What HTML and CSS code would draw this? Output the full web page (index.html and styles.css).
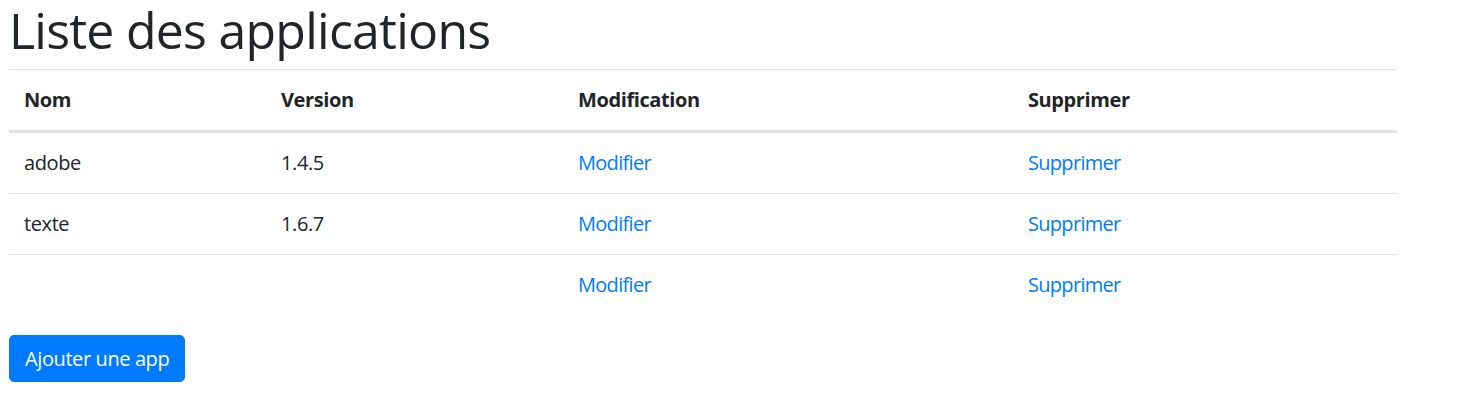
FILE: index.html
```html
<!DOCTYPE html>
<html lang="fr">
<head>
<meta charset="utf-8">
<title>Liste des applications</title>
<link rel="stylesheet" href="styles.css">
</head>
<body>
<main class="page">
  <h1 class="title">Liste des applications</h1>
  <table class="apps">
    <colgroup>
      <col class="c-nom"><col class="c-version"><col class="c-modif"><col class="c-suppr">
    </colgroup>
    <thead>
      <tr><th>Nom</th><th>Version</th><th>Modification</th><th>Supprimer</th></tr>
    </thead>
    <tbody>
      <tr><td>adobe</td><td>1.4.5</td><td><a href="#">Modifier</a></td><td><a href="#">Supprimer</a></td></tr>
      <tr><td>texte</td><td>1.6.7</td><td><a href="#">Modifier</a></td><td><a href="#">Supprimer</a></td></tr>
      <tr><td></td><td></td><td><a href="#">Modifier</a></td><td><a href="#">Supprimer</a></td></tr>
    </tbody>
  </table>
  <a class="btn" href="#">Ajouter une app</a>
</main>
</body>
</html>
```
FILE: styles.css
```css
* { box-sizing: border-box; }
html, body { margin: 0; padding: 0; background: #fff; }
body {
  font-family: "Open Sans", "Noto Sans", "Liberation Sans", sans-serif;
  font-size: 20px;
  line-height: 1.5;
  color: #212529;
}
.page {
  width: 1388px;
  margin-left: 9px;
}
.title {
  margin: 0 0 9px;
  font-size: 50px;
  font-weight: 500;
  line-height: 60px;
  letter-spacing: -0.75px;
}
.apps {
  width: 100%;
  border-collapse: collapse;
  margin-bottom: 20px;
}
.c-nom { width: 257px; }
.c-version { width: 297px; }
.c-modif { width: 450px; }
.c-suppr { width: 384px; }
.apps th, .apps td {
  padding: 15px;
  text-align: left;
  vertical-align: top;
  border-top: 1px solid #dee2e6;
  font-size: 20px;
  line-height: 30px;
  letter-spacing: -0.4px;
}
.apps th { font-weight: 700; }
.apps thead th { border-bottom: 3px solid #dee2e6; }
.apps tbody tr:first-child td { border-top: 0; }
.apps a { color: #007bff; text-decoration: none; letter-spacing: -0.7px; }
.btn {
  display: inline-block;
  padding: 7.5px 15px;
  font-size: 20px;
  line-height: 30px;
  color: #fff;
  background: #007bff;
  border: 1.25px solid #007bff;
  border-radius: 5px;
  text-decoration: none;
  letter-spacing: -0.4px;
}
```
